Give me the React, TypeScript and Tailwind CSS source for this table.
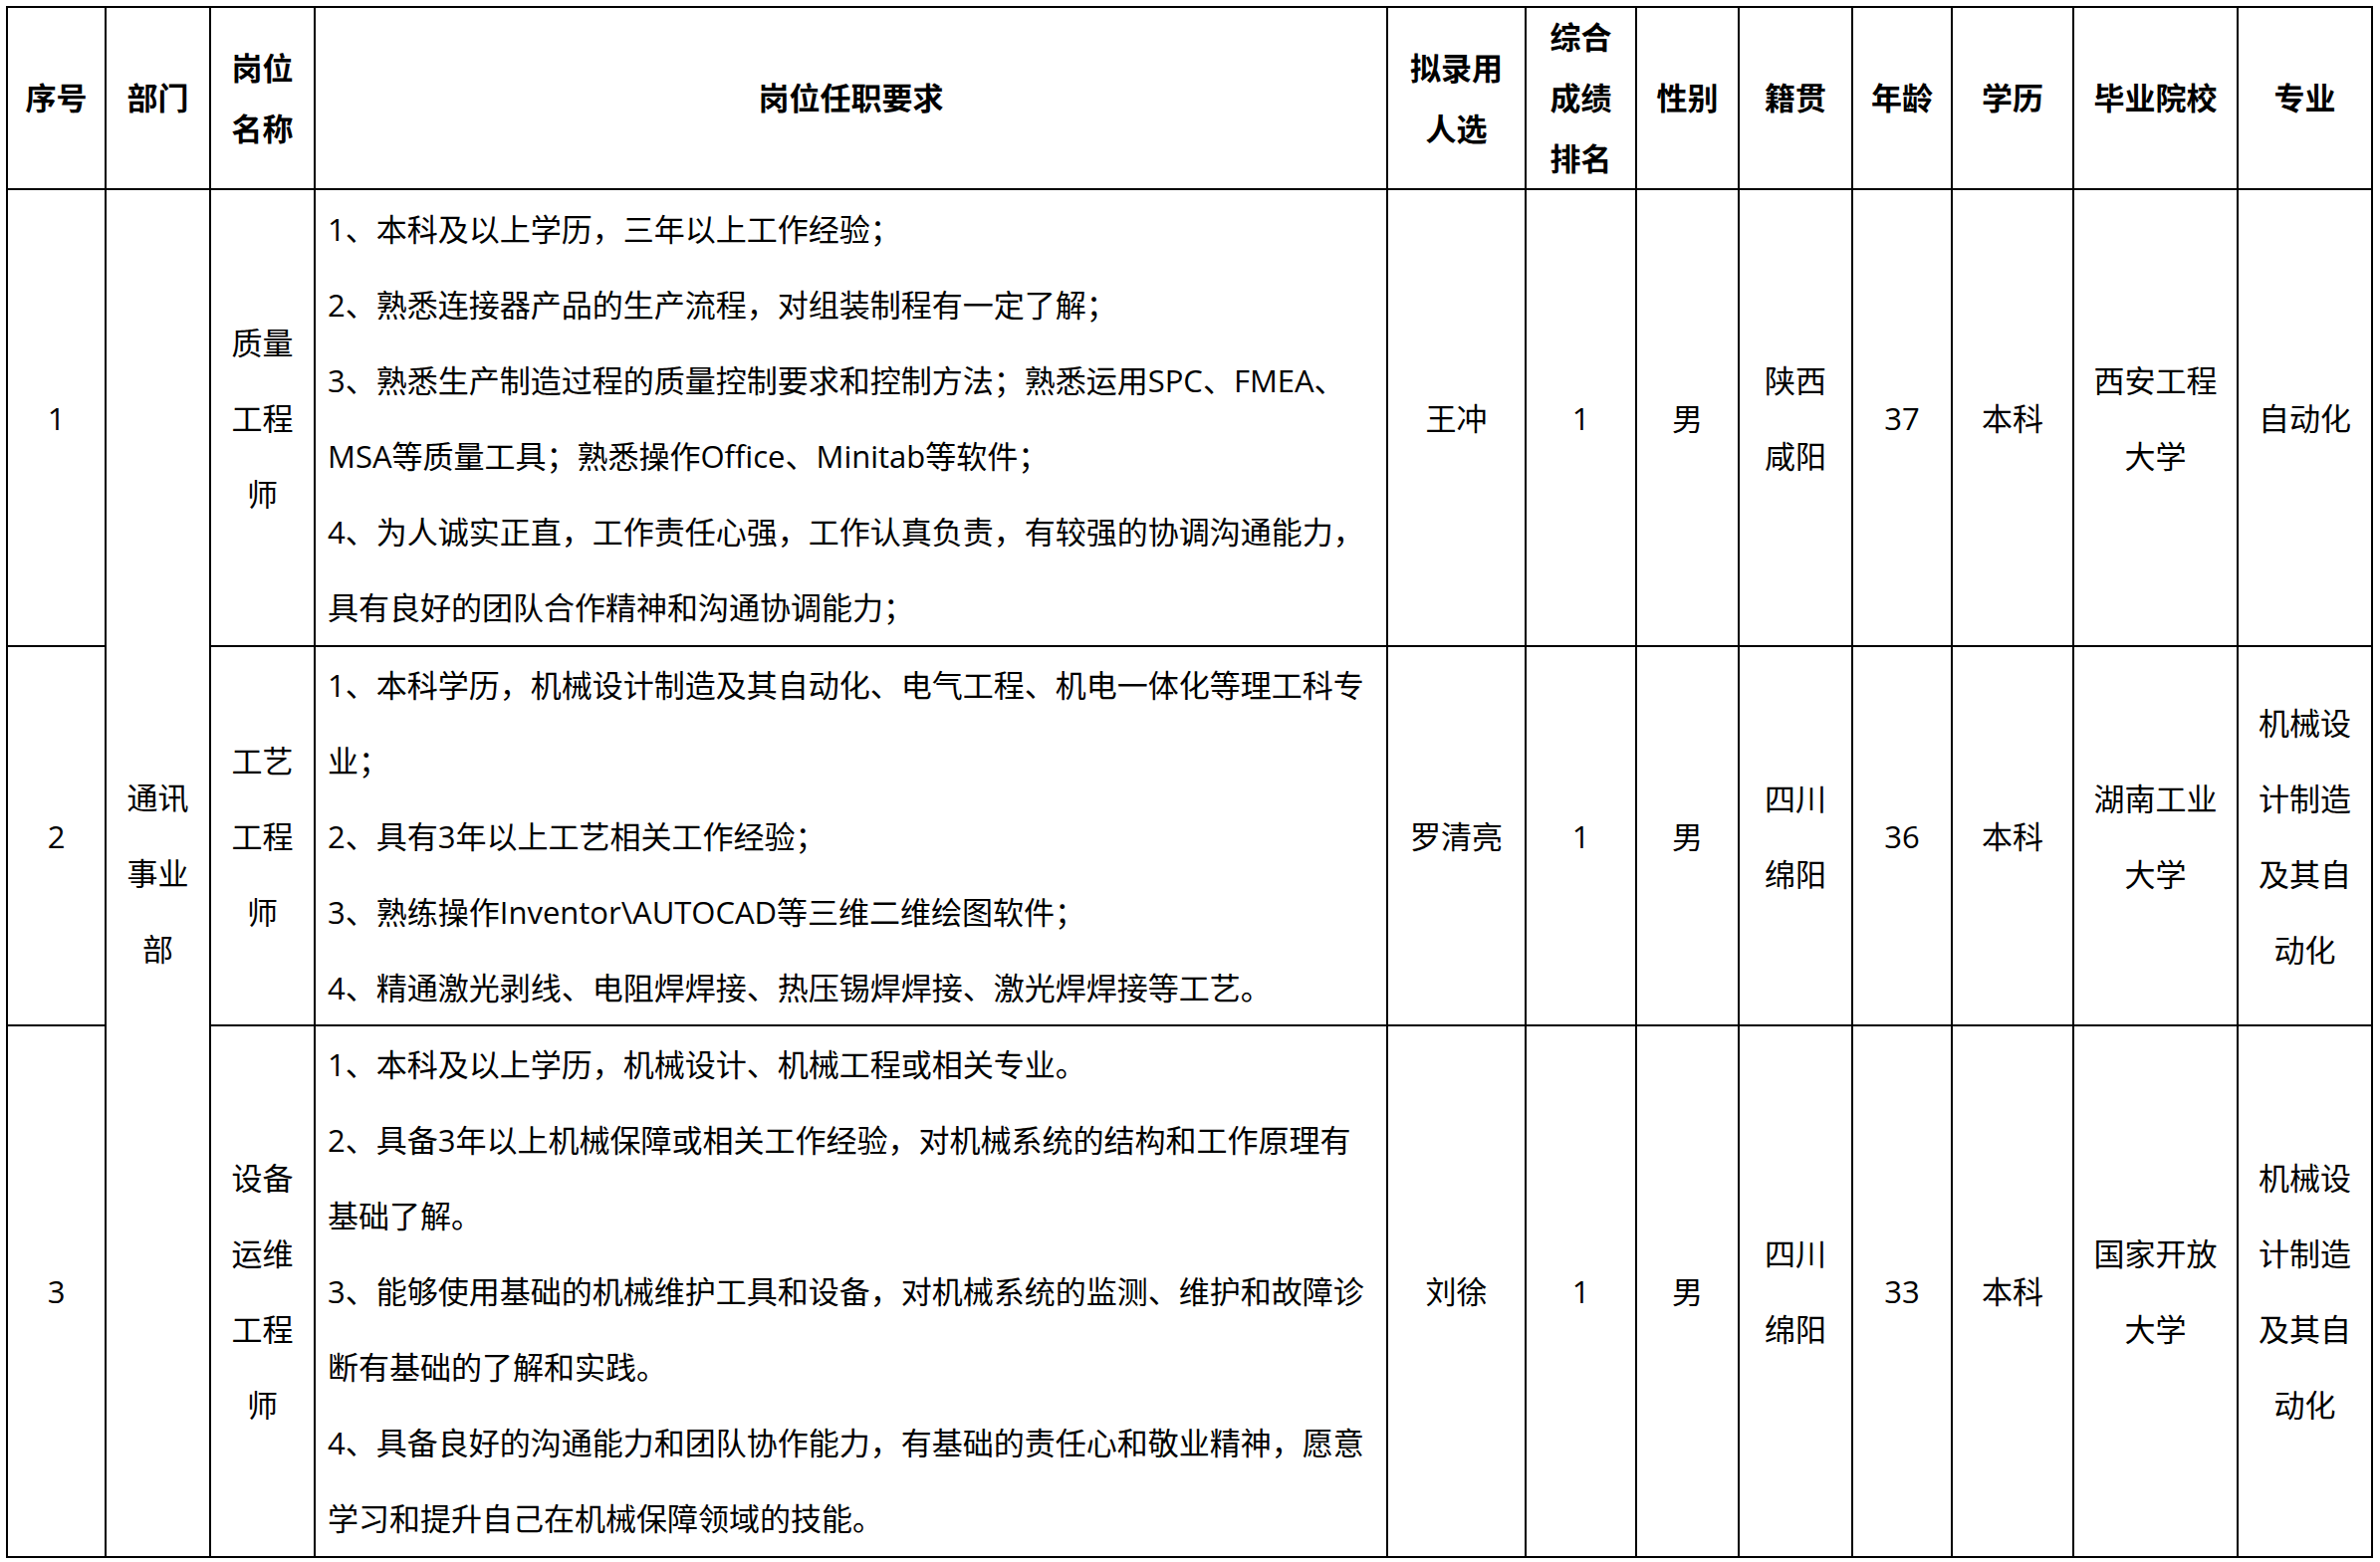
import type { ReactNode } from 'react';

type Row = {
  no: string;
  title: string[];
  reqs: string[];
  name: string;
  rank: string;
  gender: string;
  origin: string[];
  age: string;
  degree: string;
  school: string[];
  major: string[];
};

const rows: Row[] = [
  {
    no: '1',
    title: ['质量', '工程', '师'],
    reqs: [
      '1、本科及以上学历，三年以上工作经验；',
      '2、熟悉连接器产品的生产流程，对组装制程有一定了解；',
      '3、熟悉生产制造过程的质量控制要求和控制方法；熟悉运用SPC、FMEA、',
      'MSA等质量工具；熟悉操作Office、Minitab等软件；',
      '4、为人诚实正直，工作责任心强，工作认真负责，有较强的协调沟通能力，',
      '具有良好的团队合作精神和沟通协调能力；'
    ],
    name: '王冲',
    rank: '1',
    gender: '男',
    origin: ['陕西', '咸阳'],
    age: '37',
    degree: '本科',
    school: ['西安工程', '大学'],
    major: ['自动化']
  },
  {
    no: '2',
    title: ['工艺', '工程', '师'],
    reqs: [
      '1、本科学历，机械设计制造及其自动化、电气工程、机电一体化等理工科专',
      '业；',
      '2、具有3年以上工艺相关工作经验；',
      '3、熟练操作Inventor\\AUTOCAD等三维二维绘图软件；',
      '4、精通激光剥线、电阻焊焊接、热压锡焊焊接、激光焊焊接等工艺。'
    ],
    name: '罗清亮',
    rank: '1',
    gender: '男',
    origin: ['四川', '绵阳'],
    age: '36',
    degree: '本科',
    school: ['湖南工业', '大学'],
    major: ['机械设', '计制造', '及其自', '动化']
  },
  {
    no: '3',
    title: ['设备', '运维', '工程', '师'],
    reqs: [
      '1、本科及以上学历，机械设计、机械工程或相关专业。',
      '2、具备3年以上机械保障或相关工作经验，对机械系统的结构和工作原理有',
      '基础了解。',
      '3、能够使用基础的机械维护工具和设备，对机械系统的监测、维护和故障诊',
      '断有基础的了解和实践。',
      '4、具备良好的沟通能力和团队协作能力，有基础的责任心和敬业精神，愿意',
      '学习和提升自己在机械保障领域的技能。'
    ],
    name: '刘徐',
    rank: '1',
    gender: '男',
    origin: ['四川', '绵阳'],
    age: '33',
    degree: '本科',
    school: ['国家开放', '大学'],
    major: ['机械设', '计制造', '及其自', '动化']
  }
];

const headers: string[][] = [
  ['序号'],
  ['部门'],
  ['岗位', '名称'],
  ['岗位任职要求'],
  ['拟录用', '人选'],
  ['综合', '成绩', '排名'],
  ['性别'],
  ['籍贯'],
  ['年龄'],
  ['学历'],
  ['毕业院校'],
  ['专业']
];

function Cell({ children, className = '' }: { children: ReactNode; className?: string }) {
  return (
    <div className={`flex flex-col items-center justify-center border-b-2 border-r-2 border-black text-center ${className}`}>
      {children}
    </div>
  );
}

function Lines({ lines }: { lines: string[] }) {
  return (
    <>
      {lines.map((l, i) => (
        <div key={i} className="whitespace-nowrap">
          {l}
        </div>
      ))}
    </>
  );
}

export default function App() {
  return (
    <div className="min-h-screen bg-white pl-[6px] pt-[6px] text-black">
      <div
        className="grid w-max grid-cols-[99px_105px_105px_1077px_139px_111px_103px_114px_100px_122px_165px_135px] grid-rows-[183px_459px_381px_534px] border-l-2 border-t-2 border-black text-[31px] leading-[76px]"
        style={{ fontFamily: '"Open Sans", "Noto Sans CJK SC", sans-serif' }}
      >
        {headers.map((h, i) => (
          <Cell key={i} className="font-bold leading-[61px]">
            <Lines lines={h} />
          </Cell>
        ))}

        {rows.map((r, idx) => (
          <div key={r.no} className="contents">
            <Cell>{r.no}</Cell>
            {idx === 0 && (
              <Cell className="row-span-3">
                <Lines lines={['通讯', '事业', '部']} />
              </Cell>
            )}
            <Cell>
              <Lines lines={r.title} />
            </Cell>
            <div className="flex flex-col justify-center border-b-2 border-r-2 border-black pl-[12px]">
              <Lines lines={r.reqs} />
            </div>
            <Cell>{r.name}</Cell>
            <Cell>{r.rank}</Cell>
            <Cell>{r.gender}</Cell>
            <Cell>
              <Lines lines={r.origin} />
            </Cell>
            <Cell>{r.age}</Cell>
            <Cell>{r.degree}</Cell>
            <Cell>
              <Lines lines={r.school} />
            </Cell>
            <Cell>
              <Lines lines={r.major} />
            </Cell>
          </div>
        ))}
      </div>
    </div>
  );
}
